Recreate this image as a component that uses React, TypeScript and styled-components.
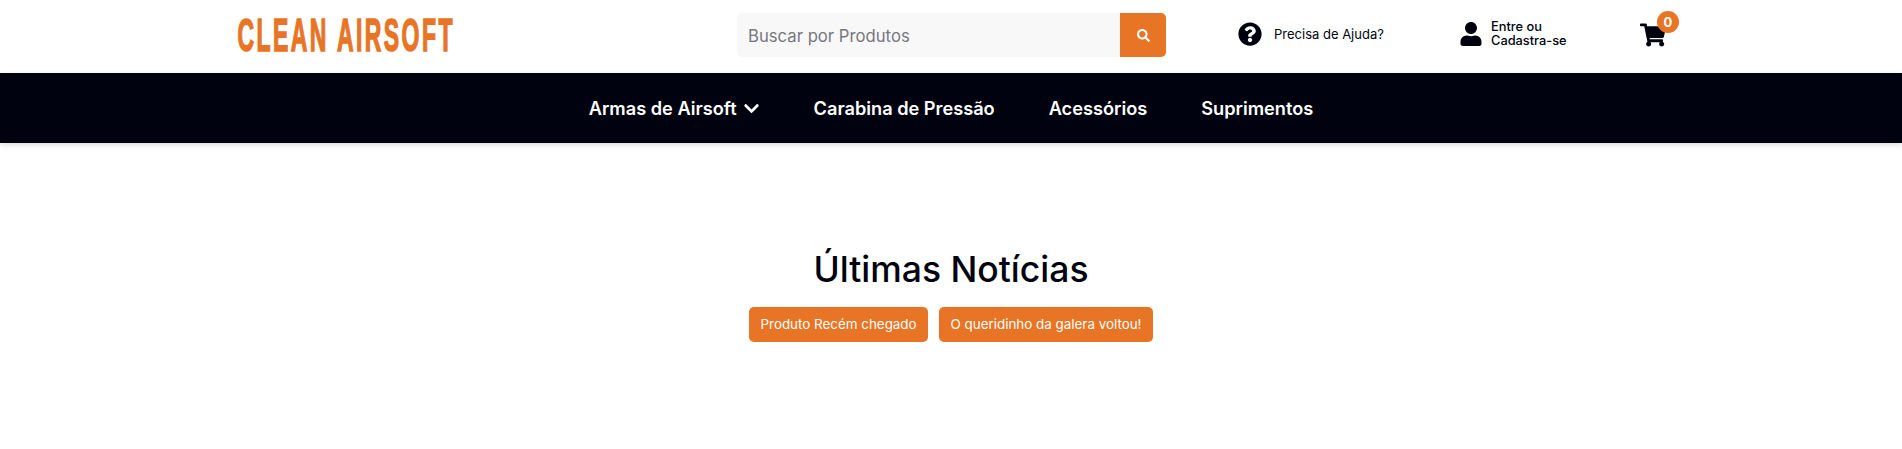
import React from "react";
import styled, { createGlobalStyle } from "styled-components";
import { FaQuestionCircle, FaUser, FaShoppingCart, FaSearch, FaChevronDown } from "react-icons/fa";

const Global = createGlobalStyle`
  html, body { margin: 0; padding: 0; background: #fff; }
  body { font-family: Inter, "Noto Sans", sans-serif; color: #00030f; }
  * { box-sizing: border-box; }
`;

const Page = styled.div`
  width: 1902px;
  height: 449px;
  overflow: hidden;
  background: #fff;
`;

const TopBar = styled.header`
  height: 73px;
  display: flex;
  align-items: flex-start;
  padding-left: 237px;
`;

const Logo = styled.svg`
  display: block;
  width: 217px;
  height: 38px;
  margin-top: 16px;
  margin-right: 283px;
  flex: none;
  overflow: visible;
`;

const Search = styled.form`
  display: flex;
  width: 429px;
  height: 44px;
  margin-top: 13px;
  margin-right: 72px;
  flex: none;
  border-radius: 5px;
  overflow: hidden;
  background: #f8f8f8;
`;

const SearchText = styled.div`
  flex: 1;
  padding-left: 11px;
  font-size: 16.7px;
  line-height: 46px;
  color: #77777f;
`;

const SearchButton = styled.button`
  width: 46px;
  border: 0;
  padding: 0;
  background: #e87425;
  color: #fff;
  display: flex;
  align-items: center;
  justify-content: center;
  font-size: 13px;
`;

const Help = styled.a`
  display: flex;
  align-items: center;
  height: 24px;
  margin-top: 22px;
  margin-right: 74px;
  flex: none;
  gap: 12px;
  font-size: 13px;
  white-space: nowrap;
  color: #00030f;
`;

const HelpLabel = styled.span`
  width: 111px;
`;

const Account = styled.a`
  display: flex;
  align-items: center;
  gap: 8px;
  margin-top: 20px;
  width: 181px;
  flex: none;
  font-size: 12.8px;
  line-height: 14px;
  font-weight: 500;
  color: #00030f;
`;

const Cart = styled.a`
  position: relative;
  margin-top: 22px;
  display: block;
  width: 27px;
  height: 24px;
  flex: none;
  color: #00030f;
`;

const Badge = styled.span`
  position: absolute;
  left: 17px;
  top: -11px;
  width: 22px;
  height: 22px;
  border-radius: 50%;
  background: #e87425;
  color: #fff;
  font-size: 13px;
  font-weight: 700;
  line-height: 22px;
  text-align: center;
`;

const Nav = styled.nav`
  height: 70px;
  background: #00030f;
  box-shadow: 0 2px 5px rgba(0, 0, 0, 0.14);
  display: flex;
  align-items: center;
  justify-content: center;
  gap: 54px;
`;

const NavItem = styled.a`
  display: flex;
  align-items: center;
  gap: 6px;
  color: #fff;
  font-size: 18.2px;
  font-weight: 600;
  white-space: nowrap;
`;

const News = styled.section`
  display: flex;
  flex-direction: column;
  align-items: center;
  padding-top: 102px;
`;

const Title = styled.h2`
  margin: 0;
  font-size: 35.5px;
  line-height: 50px;
  font-weight: 500;
  color: #00030f;
`;

const Tags = styled.div`
  display: flex;
  gap: 11px;
  margin-top: 12px;
`;

const Tag = styled.a`
  height: 35px;
  padding: 0 11.5px;
  border-radius: 5px;
  background: #e87425;
  color: #fff;
  font-size: 13.4px;
  line-height: 35px;
  white-space: nowrap;
`;

export default function App() {
  return (
    <Page>
      <Global />
      <TopBar>
        <Logo viewBox="0 0 217 38" aria-label="Clean Airsoft">
          <text
            transform="scale(0.5 1)"
            x="1"
            y="35"
            textLength="430"
            lengthAdjust="spacing"
            fontFamily="'Liberation Sans', sans-serif"
            fontWeight="700"
            fontSize="46"
            fill="#e87425"
            stroke="#e87425"
            strokeWidth="1.5"
          >
            CLEAN AIRSOFT
          </text>
        </Logo>
        <Search>
          <SearchText>Buscar por Produtos</SearchText>
          <SearchButton type="button" aria-label="Buscar">
            <FaSearch />
          </SearchButton>
        </Search>
        <Help>
          <FaQuestionCircle size={24} />
          <HelpLabel>Precisa de Ajuda?</HelpLabel>
        </Help>
        <Account>
          <FaUser size={24} />
          <span>
            Entre ou
            <br />
            Cadastra-se
          </span>
        </Account>
        <Cart>
          <FaShoppingCart size={26} />
          <Badge>0</Badge>
        </Cart>
      </TopBar>
      <Nav>
        <NavItem>
          Armas de Airsoft <FaChevronDown size={17} />
        </NavItem>
        <NavItem>Carabina de Pressão</NavItem>
        <NavItem>Acessórios</NavItem>
        <NavItem>Suprimentos</NavItem>
      </Nav>
      <News>
        <Title>Últimas Notícias</Title>
        <Tags>
          <Tag>Produto Recém chegado</Tag>
          <Tag>O queridinho da galera voltou!</Tag>
        </Tags>
      </News>
    </Page>
  );
}
